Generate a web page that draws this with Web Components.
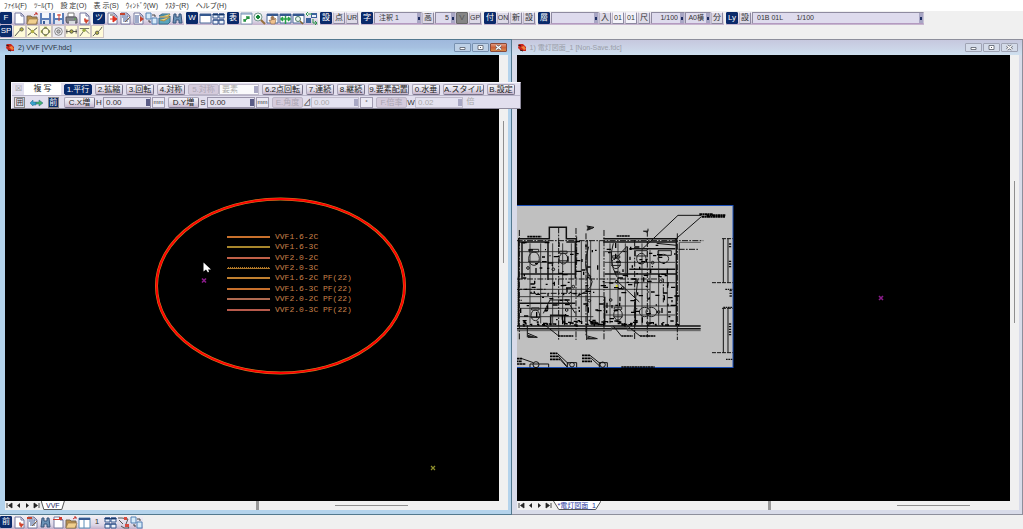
<!DOCTYPE html>
<html lang="ja">
<head>
<meta charset="utf-8">
<title>VVF</title>
<style>
html,body{margin:0;height:100%}
body{font-family:"Liberation Sans","Noto Sans CJK JP",sans-serif;font-size:8px;line-height:12px;color:#333;background:#f0f0f0;overflow:hidden}
</style>
</head>
<body>
<cad-app></cad-app>
<script>
const define = (name, css, html, setup) => {
  customElements.define(name, class extends HTMLElement {
    constructor() {
      super();
      const root = this.attachShadow({ mode: 'open' });
      const body = typeof html === 'function' ? html(this) : html;
      root.innerHTML = '<style>*{box-sizing:border-box}' + css + '</style>' + body;
      if (setup) setup(this, root);
    }
  });
};

const PAGE = '<path d="M2 1h6l3 3v8H2z" fill="#fff" stroke="#777aa0"/><path d="M8 1v3h3" fill="none" stroke="#777aa0"/>';
const GRID = '<path d="M1 2h11v9H1z" fill="#fff" stroke="#4a6a9a"/><path d="M1 2h11v2H1z" fill="#35588f"/>';
const ICONS = {
  page: PAGE,
  open: '<path d="M1 4h4l1 1h5v7H1z" fill="#b9904d" stroke="#7a6a50"/><path d="M3 7h9l-2 5H1z" fill="#f1cf8d" stroke="#9a7a4a" stroke-width=".7"/><path d="M8 3l3-2M9 1h2v2" stroke="#c3302a" fill="none"/>',
  save: '<path d="M1 1h11v11H1z" fill="#5b7eb8"/><path d="M3 1h7v5H3z" fill="#f4f6fb"/><path d="M3 8h7v4H3z" fill="#dfe5f2"/><path d="M4 9h2v3H4z" fill="#3b5c98"/>',
  saveas: '<path d="M1 1h11v11H1z" fill="#5b7eb8"/><path d="M3 1h7v5H3z" fill="#fff"/><path d="M3 8h7v4H3z" fill="#dfe5f2"/><path d="M5 3h4M7 2v7" stroke="#d23b2c"/>',
  print: '<path d="M3 1h6v4H3z" fill="#fff" stroke="#777"/><path d="M1 5h10l1 2v4H2L1 9z" fill="#85868c" stroke="#565760"/><path d="M4 9h6v3H4z" fill="#d8dbe0"/><circle cx="10" cy="7" r="1" fill="#5ea04f"/>',
  pagered: PAGE + '<path d="M6 7l5 1-3 4z" fill="#d0432d"/><path d="M7 6v4" stroke="#d0432d"/>',
  out: PAGE + '<path d="M4 7h5M7 4l4 3-4 3z" fill="#e03120" stroke="#e03120"/><path d="M4 3h3" stroke="#555"/>',
  list: PAGE + '<path d="M3 3h4M3 5h6M4 7h6M4 9h5" stroke="#3a5793"/><path d="M1 1h5v2H1z" fill="#c3442f"/><path d="M6 10l5-5" stroke="#846745"/>',
  listend: PAGE + '<path d="M3 4h4M3 6h4M3 8h4M3 10h4" stroke="#3a5793"/><path d="M8 4l4 3-4 3z" fill="#c3442f"/>',
  link: '<path d="M1 1h5v6H1zM7 6h5v6H7z" fill="#d6eaf8" stroke="#5282b4"/><path d="M7 3h3v2M6 10H4V8" stroke="#444" fill="none"/>',
  stack: '<path d="M1 4h9l2-2H4zM1 12V6h9l2-2v6l-2 2z" fill="#5aa5bd" stroke="#396f8a"/><path d="M2 8l4 1 6-4M2 5h8l2-3" fill="#ebd37a" stroke="#aa8f42"/>',
  find: '<path d="M3 2h2v3h3V2h2l1 9H8V8H5v3H2z" fill="#6b92b6" stroke="#36547b"/>',
  win: GRID,
  tile: '<path d="M1 2h5v4H1zM7 2h5v4H7zM1 8h5v4H1zM7 8h5v4H7z" fill="#eef4fc" stroke="#36588e"/><path d="M1 2h5v1H1zM7 2h5v1H7zM1 8h11" stroke="#234984"/>',
  cols: '<path d="M1 2h11v10H1zM6 2v10" fill="#fff" stroke="#5b8eb8"/><path d="M1 3h11" stroke="#35588f" stroke-width="2"/>',
  fit: '<path d="M1 1h11v11H1z" fill="#fff" stroke="#8aa0b8"/><path d="M1 2h11" stroke="#6f8fb5"/><path d="M4 9l5-4M6 5h3v2M4 7v2h2" stroke="#25923f" fill="none" stroke-width="1.300"/>',
  zoom: '<circle cx="5" cy="5" r="4" fill="#ecf7ef" stroke="#789b91"/><path d="M8 8l4 4" stroke="#96703b" stroke-width="2"/><path d="M3 5h4M5 3v4" stroke="#168537" stroke-width="2"/>',
  hand: GRID + '<path d="M5 12L3 8l2 1V5h1v3-4h1v4-3h1v3l1-2 1 1-1 5z" fill="#efc18d" stroke="#876344" stroke-width=".6"/>',
  move: GRID + '<path d="M2 7h9M6.500 4v8M4 5l-2 2 2 2M9 5l2 2-2 2" stroke="#25a045" fill="none" stroke-width="1.500"/>',
  zoomwin: GRID + '<circle cx="6" cy="7" r="2.500" fill="#e9f5ef" stroke="#4c7e6b"/><path d="M8 9l3 3" stroke="#86652f" stroke-width="1.500"/>',
  back: '<path d="M6 1h6v5H6zM1 6h5v5H1z" fill="#3a619c"/><path d="M3 2h4M3 4l-2-2 2-2M8 7v4h4M10 9l2 2-2 2" fill="none" stroke="#289848"/><path d="M7 3h4v2H7z" fill="#e9eff8"/>',
  redhat: PAGE + '<path d="M1 3h6V1h3v3H1z" fill="#cc3c30"/>',
  cut: '<path d="M1 2h4M2 4l4 4M5 2l6 1-2 5 3 4H7l-3-2" stroke="#555" fill="none"/><path d="M7 1h3v3H7zM8 8h4v3H8z" fill="#d84c40"/>',
  sline: '<path d="M1 12l6-7" stroke="#333"/><circle cx="9" cy="4" r="2" fill="#b8b73f" stroke="#555"/>',
  scross: '<path d="M1 2l11 9M12 2L1 11" stroke="#222"/><circle cx="6.500" cy="6.500" r="2" fill="#b5b346"/>',
  scirc: '<circle cx="6.500" cy="6.500" r="4" fill="none" stroke="#555"/><path d="M5 2h3M5 11h3M2 5v3M11 5v3" stroke="#858c3f" stroke-width="2"/>',
  scent: '<circle cx="6.500" cy="6.500" r="4.500" fill="none" stroke="#777"/><circle cx="6.500" cy="6.500" r="2" fill="#bbb" stroke="#666"/>',
  smid: '<path d="M0 6.500h13M1 4v5M12 4v5" stroke="#444"/><circle cx="6.500" cy="6.500" r="2" fill="#b4b247" stroke="#444"/>',
  sperp: '<path d="M1 12l6-8 5 5M1 3h11" stroke="#555" fill="none"/><circle cx="6" cy="5" r="2" fill="#9cad43"/>',
  snear: '<path d="M1 12C5 7 7 9 12 1" stroke="#444" fill="none"/><circle cx="6" cy="8" r="2" fill="#b4b247" stroke="#555"/>',
  arrows: '<path d="M0 7l3-3v2h3v3H3v1z" fill="#38a4cc" stroke="#27668c" stroke-width=".5"/><path d="M6 6h3V4l4 3-4 3V8H6z" fill="#47b36a" stroke="#27668c" stroke-width=".5"/>'
};

define('tool-icon', `
:host{display:block;flex:none;width:13px;height:13px}
button{display:block;width:13px;height:13px;padding:0;border:0;background:none}
:host([snap]) button{background:#fffbd8;border:1px solid #cfc6c4}
:host([snap][off]) button{background:#eeedf2}
svg{display:block;width:100%;height:100%}`,
  el => `<button aria-label="${el.getAttribute('name')}"><svg viewBox="0 0 13 13">${ICONS[el.getAttribute('name')]}</svg></button>`);

define('tool-key', `
:host{display:block;flex:none;width:13px;height:13px}
button{display:block;width:12px;height:12px;padding:0;border:1px solid;border-color:#f3f0f8 #8d88a0 #8d88a0 #bcb7c9;border-radius:1px;background:#dcd9e6;color:#333;font:inherit;line-height:10px;text-align:center;white-space:nowrap;overflow:hidden;display:flex;justify-content:center}
:host([tag]) button{background:#0a2a6a;border-color:#0a2a6a;color:#fff}
:host([dark]) button{background:#858585;border-color:#666;color:#555}
:host([light]) button{background:#f4f3fa}
:host([light]) button,:host([small]) button{font-size:7px}
:host([plain]) button{background:none;border-color:transparent}`,
  '<button><slot></slot></button>');

define('tool-pick', `
:host{display:block;flex:none;height:13px;width:48px;position:relative}
:host([xs]){width:21px}:host([s]){width:26px}:host([m]){width:34px}:host([xl]){width:172px}
select{appearance:none;display:block;width:100%;height:12px;margin:0;padding:0 6px 0 4px;border:1px solid;border-color:#8f8ba0 #c8c4d6 #b49ac0 #8f8ba0;border-radius:1px;background:#dedbed;color:#333;font:inherit;font-size:7px;line-height:10px}
:host([s]) select,:host([xs]) select{padding-left:0}
:host([end]) select{text-align:right;text-align-last:right}
i{position:absolute;right:1px;top:1px;width:4px;height:10px;background:#a8a6c4;pointer-events:none}
i::after{content:"";position:absolute;left:1px;top:4px;width:2px;height:3px;background:#1f2f62}`,
  el => `<select aria-label="${el.getAttribute('label')}"><option>${el.getAttribute('value')}</option></select><i></i>`);

define('tool-group', `
:host{display:flex;height:13px;background:linear-gradient(#f1eff5,#dcd6e6 70%,#c3b1cb)}`,
  '<slot></slot>');

define('menu-bar', `
:host{display:block;background:#fff;height:11px}
nav{display:flex;gap:7px;padding:0 4px;font-size:7px;line-height:11px;font-family:"Liberation Sans","Noto Sans CJK JP",sans-serif}
a{color:#333;text-decoration:none;white-space:pre}`,
  '<nav>' + ['ﾌｧｲﾙ(F)', 'ﾂｰﾙ(T)', '設 定(O)', '表 示(S)', 'ｳｨﾝﾄﾞｳ(W)', 'ﾗｽﾀｰ(R)', 'ヘルプ(H)'].map(t => `<a href="#">${t}</a>`).join('') + '</nav>');

const icons = s => s.split(' ').map(n => `<tool-icon name="${n}"></tool-icon>`).join('');
const tag = t => `<tool-key tag>${t}</tool-key>`;
const keys = s => s.split(' ').map(n => `<tool-key ${n.length > 1 ? 'small' : ''}>${n}</tool-key>`).join('');

define('tool-rows', `
:host{display:block}
.row{display:flex;gap:2px;height:14px;padding-top:1px}
.row+.row{height:14px;padding-top:0}`,
  `<div class="row">
<tool-group>${tag('F')}${icons('page open save saveas print pagered')}</tool-group>
<tool-group>${tag('ツ')}${icons('out list listend link stack find')}</tool-group>
<tool-group>${tag('W')}${icons('win tile')}</tool-group>
<tool-group>${tag('表')}${icons('fit zoom hand move zoomwin back')}</tool-group>
<tool-group>${tag('設')}${keys('点 UR')}</tool-group>
<tool-group>${tag('字')}<tool-pick label="文字種" value="注釈 1"></tool-pick>${keys('高')}<tool-pick xs end label="文字高" value="5"></tool-pick><tool-key dark>V</tool-key>${keys('GP')}</tool-group>
<tool-group>${tag('付')}${keys('ON 新 設')}</tool-group>
<tool-group>${tag('層')}<tool-pick label="層" value=""></tool-pick>${keys('入')}<tool-key light>01</tool-key><tool-key light>01</tool-key>${keys('尺')}<tool-pick m end label="縮尺" value="1/100"></tool-pick><tool-pick s end label="用紙" value="A0横"></tool-pick>${keys('分')}</tool-group>
<tool-group>${tag('Ly')}${keys('設')}<tool-pick xl label="レイヤ" value="01B 01L &nbsp; &nbsp; &nbsp; 1/100"></tool-pick></tool-group>
</div>
<div class="row"><tool-group>${tag('SP')}${['sline', 'scross', 'scirc', 'scent', 'smid', 'sperp', 'snear'].map(n => `<tool-icon snap ${n === 'scent' ? 'off' : ''} name="${n}"></tool-icon>`).join('')}</tool-group></div>`);

define('cad-window', `
:host{display:flex;flex-direction:column;flex:1;min-width:0;padding:0 3px 4px 5px;background:#b4d3ec;border:1px solid #53798f;border-width:1px 1px 1px 0}
:host([idle]){background:#d8dbe9;border-color:#8d8f9c}
header{display:flex;align-items:center;gap:3px;height:15px;flex:none;margin:0 -3px 0 -5px;padding:0 4px 0 6px;background:linear-gradient(#9fb8dc,#a6c0e0 50%,#b4d8ef)}
:host([idle]) header{background:linear-gradient(#c6c8de,#cbd3e6 50%,#cfe0ef)}
h2{flex:1;margin:0;font:inherit;font-size:7px;line-height:15px;color:#28323c;white-space:nowrap}
:host([idle]) h2{color:#9a9ea8}
header svg{width:9px;height:9px;flex:none}
.caps{display:flex;gap:1px}
.caps button{width:17px;height:9px;padding:0;border:1px solid #7891b0;border-radius:1px;background:#bdd0e6;display:grid;place-items:center}
:host([idle]) .caps button{border-color:#a0a4b4;background:#d4dbe9}
:host(:not([idle])) .caps button.x{background:linear-gradient(#e29a80,#cc6038 50%,#d98948);border-color:#8a4a3a}
.caps svg{width:9px;height:7px}
main{flex:1;min-height:0;display:grid;grid-template-columns:1fr 9px;background:#000}
.vs{background:#f0f0f0;display:flex;justify-content:center;padding-top:66px}
:host([idle]) .vs{padding-top:126px}
.vs i{width:1px;height:142px;background:#8f8f8f}
footer{flex:none;height:9px;display:grid;grid-template-columns:251px 3px 1fr;background:#f0f0f0}
.tabs{display:flex;align-items:stretch}
.nav{display:flex}
.nav button{width:9px;height:9px;padding:0;border:0;background:none;display:grid;place-items:center}
.nav svg{width:7px;height:7px}
.tab{position:relative;isolation:isolate;height:9px;padding:0 5px;line-height:9px;font-size:7px;color:#27275f;border:0;background:none;font-family:inherit;white-space:nowrap}
:host([idle]) .tab{color:#27379f}
.tab svg{position:absolute;left:0;top:0;width:100%;height:100%;z-index:-1}
.sp{background:#999}
.hs{display:flex;align-items:center;justify-content:flex-end;padding-right:100px}
:host([idle]) .hs{padding-right:49px}
.hs i{width:73px;height:1px;background:#8f8f8f}`,
  el => `<header><svg viewBox="0 0 9 9"><path d="M1 1l4 0 3 3v4H3L0 5z" fill="#c9261c"/><path d="M3 4l3-1 2 3-2 1z" fill="#f08338"/><path d="M0 2l3 1M2 7l3 1" stroke="#391616"/></svg>
<h2>${el.getAttribute('heading')}</h2><div class="caps">
<button aria-label="最小化"><svg viewBox="0 0 9 7"><path d="M2 3.500h5v2H2z" fill="#fff" stroke="#555a66" stroke-width=".8"/></svg></button>
<button aria-label="最大化"><svg viewBox="0 0 9 7"><path d="M2 1.500h5v4H2z" fill="#fff" stroke="#555a66" stroke-width=".8"/><path d="M4 3h1v1H4z" fill="#555a66"/></svg></button>
<button class="x" aria-label="閉じる"><svg viewBox="0 0 9 7"><path d="M2 1.500l5 4M7 1.500l-5 4" stroke="#555a66" stroke-width="2.600"/><path d="M2 1.500l5 4M7 1.500l-5 4" stroke="#fff" stroke-width="1.400"/></svg></button></div></header>
<main><slot></slot><div class="vs"><i></i></div></main>
<footer><div class="tabs"><div class="nav">
<button aria-label="先頭"><svg viewBox="0 0 7 7"><path d="M1 1v5M6 1v5L2.500 3.500z" stroke="#222" stroke-width=".8" fill="#222"/></svg></button>
<button aria-label="前"><svg viewBox="0 0 7 7"><path d="M5 1v5L2 3.500z" fill="#222"/></svg></button>
<button aria-label="次"><svg viewBox="0 0 7 7"><path d="M2 1v5l3-2.500z" fill="#222"/></svg></button>
<button aria-label="最後"><svg viewBox="0 0 7 7"><path d="M6 1v5M1 1v5l3.500-2.500z" stroke="#222" stroke-width=".8" fill="#222"/></svg></button></div>
<button class="tab"><svg viewBox="0 0 100 9" preserveAspectRatio="none"><path d="M1 0L12 8.500H88L99 0" fill="#fff" stroke="#555" vector-effect="non-scaling-stroke"/></svg>${el.getAttribute('tab')}</button></div>
<div class="sp"></div><div class="hs"><i></i></div></footer>`);

const rows = [
  ['VVF1.6-2C', 182, '#c8702c'], ['VVF1.6-3C', 192, '#a8862c'], ['VVF2.0-2C', 203, '#c06048'], ['VVF2.0-3C', 213, '#b07828'],
  ['VVF1.6-2C PF(22)', 223, '#c08030'], ['VVF1.6-3C PF(22)', 234, '#c8702c'], ['VVF2.0-2C PF(22)', 244, '#b06a50'], ['VVF2.0-3C PF(22)', 255, '#b85a4c']];
const SHEET = ':host{display:block;min-width:0;overflow:hidden}svg{display:block;width:100%;height:100%}';
define('wire-sheet', SHEET + 'text{font:8px "Liberation Mono",monospace;fill:#c8804a;white-space:pre}', `
<svg><ellipse cx="275.500" cy="231" rx="124" ry="87" fill="none" stroke="#c88a24" stroke-width="3"/>
<ellipse cx="275.500" cy="231" rx="124" ry="87" fill="none" stroke="#f00" stroke-width="2"/>
${rows.map((r, i) => `<path d="M222 ${r[1]}h43" stroke="${r[2]}" stroke-width="2"/>${i === 3 ? '<path d="M222 212.500h43" stroke="#000" stroke-dasharray="1 1"/>' : ''}<text x="270" y="${r[1] + 2}">${r[0]}</text>`).join('')}
<path d="M198.500 207.500v9l2.500-2 2 3 1-1-1-2h3z" fill="#fff"/>
<path d="M197 223.500l4 4M201 223.500l-4 4" stroke="#8a1c8a" stroke-width="1.600"/>
<path d="M426 411l4 4M430 411l-4 4" stroke="#8f8f2c" stroke-width="1.200"/></svg>`);

const toilet = (x, y, s) => `<g transform="translate(${x} ${y})"><ellipse rx="${16 * s}" ry="${20 * s}"/><path d="M${-14 * s} ${-20 * s}h${28 * s}v${-8 * s}h${-28 * s}zM${-18 * s} ${8 * s}h${36 * s}"/></g>`;
const specks = () => {
  let s = '', n = 17;
  const r = m => (n = (n * 1103 + 7919) % 65521) % m;
  for (let i = 0; i < 180; i++) {
    const x = 32 + r(465), y = 125 + r(240), w = 3 + r(14);
    s += r(3) ? `M${x} ${y}h${w}` : `M${x} ${y}v${w}`;
  }
  for (let i = 0; i < 60; i++) s += `M${32 + r(465)} ${362 + r(14)}h${4 + r(8)}v${r(8)}`;
  return s;
};
define('plan-sheet', SHEET, `
<svg><rect x="-1" y="150.500" width="217" height="162" fill="#c0c0c0" stroke="#1c50b8"/>
<g transform="translate(-7 145) scale(.33333)" fill="none" stroke="#111" stroke-width="3">
<g stroke-width="4.500"><path d="M24 116h94V82h51v34h31M24 126h94M169 126h31M26 116v260M18 378h554M280 116h222M280 126h220M499 116v260M18 386h554"/><path d="M36 128v110M114 128v112M196 128v108M32 222h166M284 222h214M358 208h138M352 140v92M358 146h138M284 290v86M376 300v76M30 310h166M122 376v-30h42v30"/></g>
<path d="M508 376V127h64M508 127v249M18 392h286v-10h48v10h220" stroke="#444" stroke-width="2.500"/>
<path d="M60 130v240M92 130v240M128 130v240M158 130v240M184 130v240M214 122v250M242 122v250M268 122v250M300 130v240M324 130v240M346 130v240M396 130v246M420 150v226M446 150v226M472 206v170" stroke="#222" stroke-width="2.500"/>
<path d="M30 155h168M30 187h168M30 268h390M30 290h250M30 325h168M30 350h220M284 155h70M284 187h212M284 248h212M284 318h212M284 345h212" stroke="#222" stroke-width="2.500"/>
<path d="M28 90v330M146 82v340M198 84v336M282 90v330M374 120v300M412 92v320M502 100v320M228 100v310M20 122h560M20 237h440v70M200 110v80M506 148h60M60 280h180M18 268h90" stroke-dasharray="18 4 5 4"/>
<path d="M232 120v252M236 140q-20 60 4 90t-40 60M310 130q-16 50 10 100M318 240l70 66M312 180l40-42M384 236l-12 100M100 340l20-40h50l26 40" stroke-width="3"/>
<g stroke="#222">${toilet(72, 176, 1)}${toilet(160, 176, .8)}${toilet(318, 190, .8)}${toilet(76, 346, .8)}${toilet(324, 344, .8)}<ellipse cx="394" cy="176" rx="14" ry="16"/><ellipse cx="460" cy="176" rx="16" ry="13"/><path d="M376 152h36v16h-36zM444 152h40v14h-40z"/><ellipse cx="424" cy="336" rx="16" ry="14"/><ellipse cx="404" cy="336" rx="16" ry="14"/></g>
<g>${[[190, 260], [238, 230], [238, 302], [320, 245], [428, 188], [452, 244], [446, 336], [338, 264], [130, 208], [170, 330], [54, 204], [302, 300]].map(p => `<circle cx="${p[0]}" cy="${p[1]}" r="4"/>`).join('')}</g>
<path d="${specks()}" stroke="#000" stroke-width="4"/>
<path d="M18 230v146" stroke-width="8" stroke-dasharray="3 3"/>
<path d="M396 148L504 46h70M494 120l80-70M440 130l60 6"/>
<path d="M568 43h40M575 50h70M590 46h56" stroke="#000" stroke-width="6" stroke-dasharray="9 1 5 1"/>
<path d="M52 110h42M320 108h40M144 408h46M334 408h34M390 408h46M334 501h100" stroke="#000" stroke-width="5" stroke-dasharray="7 1"/>
<path d="M106 376l40 32M310 378l24 30M350 376l40 32M230 376v44M52 376v36M230 90l22-8-22-4M400 94h14v-8M54 400l28 12H54M232 408l30 8h-30"/>
<path d="M232 78l18 7-18 7zM398 92h14v7zM54 404l26 8H54zM232 410l26 8h-26z" fill="#222" stroke="none"/>
<path d="M640 116v132M654 116v132M640 325v133M654 325v133"/>
<path d="M636 116h32M636 325h32M606 248h62M606 458h62" stroke-dasharray="12 3"/>
<path d="M660 130v14M660 182v20M662 270v20M660 370v36" stroke-width="7" stroke-dasharray="4 4"/><path d="M646 268h22M640 322h28M648 478h20" stroke-width="4" stroke-dasharray="5 2"/>
<path d="M120 460h22M120 469h26M120 478h30M20 476h16M18 484h18M20 492h26M216 466h24M216 475h28M216 484h30" stroke="#000" stroke-width="5" stroke-dasharray="8 1"/>
<path d="M142 460l34 32M146 469l26 32M150 478l20 22M240 466l30 24M244 475l26 24M36 476l34 12M60 502v-10h56v10M172 502v-14h28v14M268 502v-14h24v14"/>
<circle cx="78" cy="494" r="9"/><circle cx="186" cy="494" r="7"/><circle cx="278" cy="494" r="8"/><circle cx="320" cy="258" r="3" fill="#e0e000" stroke="none"/></g>
<path d="M362 241l4 4M366 241l-4 4" stroke="#8a1c8a" stroke-width="1.600"/></svg>`);

define('copy-palette', `
:host{display:block;width:510px;background:#e2dfee;border:1px solid;border-color:#f8f7fc #8e8a9c #8e8a9c #f8f7fc;box-sizing:border-box;color:#333}
.r{display:flex;height:12px;gap:3px;align-items:center}
.r+.r{border-top:1px solid #b8b4c8;height:13px}
.lead{display:flex;width:49px;flex:none;align-items:center;height:12px}
.lead button{width:12px;height:12px;padding:0;border:0;background:none;color:#999;font:inherit;line-height:12px}
.lead b{flex:1;background:#fff;font-weight:400;text-align:center;line-height:12px;white-space:pre;color:#222}
.lead.two{justify-content:space-around}
.two button{width:11px;height:11px;line-height:9px;border:1px solid #888;color:#333}
.two button.on{background:#0a2a6a;color:#fff}
button.c{flex:none;width:28px;height:11px;padding:0;border:1px solid;border-color:#a9a5b8 #77738a #77738a #a9a5b8;border-radius:2px;background:linear-gradient(#f6f5fa,#dcd8e6 60%,#cbb9cf);color:#222;font:inherit;line-height:9px;white-space:nowrap;overflow:hidden}
button.c.w{width:41px}button.c.n{width:31px}
button.c.on{background:#0a2a6a;color:#fff;border-color:#0a2a6a}
button.c:disabled{background:#d5cbdc;color:#aaa5b3;border-color:#bbb5c6}
.pair{display:flex;flex:none;align-items:center}
.pair label{width:8px;flex:none;text-align:center;line-height:11px}
.field{position:relative;width:48px;height:11px;flex:none}
.short{width:40px}
input,select{appearance:none;display:block;width:100%;height:11px;margin:0;padding:0 8px 0 2px;border:1px solid #9994aa;border-radius:0;background:#e4e2f0;font:inherit;line-height:9px;color:#333}
input:disabled,select:disabled{color:#aaa;opacity:1;border-color:#c0bccc}
.short select{background:#fafafc}
.field::after{content:"";position:absolute;right:1px;top:2px;width:4px;height:7px;background:#5a5c86}
.dis::after{background:#a9a8c4}
.unit{width:13px;height:11px;margin-left:1px;border:1px solid #a09bb0;padding:0;background:#ebe9f4;font:inherit;font-size:6px;line-height:8px;color:#333;text-align:center}
.unit.bare{border:0;background:none;font-size:8px;color:#aaa}`,
  () => {
    const b = (t, c = '', d = '') => `<button class="c ${c}" ${d}>${t}</button>`;
    const f = (btn, lab, val, unit, id, d = '') => `<div class="pair">${b(btn, 'n', d)}<label for="${id}">${lab}</label><span class="field ${d && 'dis'}"><input id="${id}" value="${val}" ${d}></span><button class="unit ${unit === '倍' ? 'bare' : ''}">${unit}</button></div>`;
    return `<div class="r"><div class="lead"><button aria-label="閉じる">☒</button><b>複 写</b></div>${b('1.平行', 'on')}${b('2.拡縮')}${b('3.回転')}${b('4.対称')}<div class="pair">${b('5.対称', 'n', 'disabled')}<span class="field short dis"><select aria-label="対称" disabled><option>要素</option></select></span></div>${b('6.2点回転', 'w')}${b('7.連続')}${b('8.継続')}${b('9.要素配置', 'w')}${b('0.水垂')}${b('A.スタイル', 'w')}${b('B.設定')}</div>
<div class="r"><div class="lead two"><button>囲</button><tool-icon name="arrows"></tool-icon><button class="on">前</button></div>${f('C.X増', 'H', '0.00', 'mm', 'h')}${f('D.Y増', 'S', '0.00', 'mm', 's')}${f('E.角度', '⊿', '0.00', '°', 'a', 'disabled')}${f('F.倍率', 'W', '0.02', '倍', 'w', 'disabled')}</div>`;
  });

define('cad-app', `
:host{display:flex;flex-direction:column;height:100vh;position:relative}
.desk{display:flex;flex:1;min-height:0}
.foot{display:flex;height:14px;flex:none;padding-top:1px}
copy-palette{position:absolute;left:11px;top:82px}`,
  `<menu-bar></menu-bar><tool-rows></tool-rows>
<div class="desk"><cad-window heading="2) VVF [VVF.hdc]" tab="VVF"><wire-sheet></wire-sheet></cad-window>
<cad-window idle heading="1) 電灯図面_1 [Non-Save.fdc]" tab="*電灯図面_1"><plan-sheet></plan-sheet></cad-window></div>
<div class="foot"><tool-group>${tag('前')}${icons('pagered list find redhat open cols')}<tool-key plain>1</tool-key>${icons('tile cut link')}</tool-group></div>
<copy-palette></copy-palette>`);
</script>
</body>
</html>
